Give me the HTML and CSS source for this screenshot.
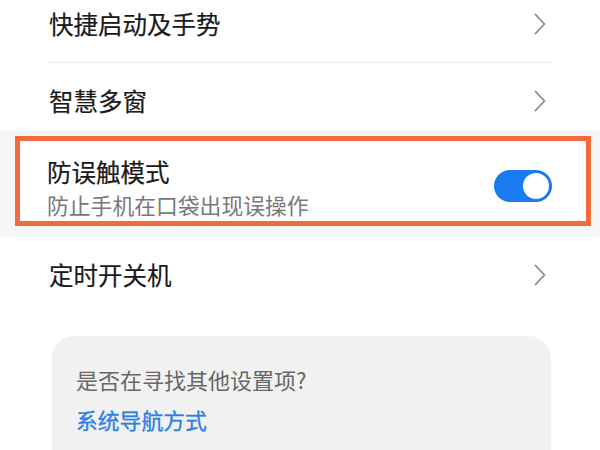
FILE: index.html
```html
<!DOCTYPE html>
<html lang="zh-CN">
<head>
  <meta charset="UTF-8">
  <meta name="viewport" content="width=device-width, initial-scale=1.0">
  <title>辅助功能</title>
  <link rel="stylesheet" href="styles.css">
</head>
<body>
  <div class="settings">
    <div class="row row-first">
      <span class="row-title">快捷启动及手势</span>
      <svg class="chevron" width="12" height="22" viewBox="0 0 12 22"><polyline points="1.5,1.5 10.5,11 1.5,20.5"/></svg>
    </div>
    <div class="divider"></div>
    <div class="row row-second">
      <span class="row-title">智慧多窗</span>
      <svg class="chevron" width="12" height="22" viewBox="0 0 12 22"><polyline points="1.5,1.5 10.5,11 1.5,20.5"/></svg>
    </div>

    <!-- ligne mise en évidence -->
    <div class="highlight">
      <div class="marked">
        <div class="marked-text">
          <div class="marked-title">防误触模式</div>
          <div class="marked-sub">防止手机在口袋出现误操作</div>
        </div>
        <div class="switch on"><span class="knob"></span></div>
      </div>
    </div>

    <div class="row">
      <span class="row-title">定时开关机</span>
      <svg class="chevron" width="12" height="22" viewBox="0 0 12 22"><polyline points="1.5,1.5 10.5,11 1.5,20.5"/></svg>
    </div>

    <div class="hint-card">
      <p class="hint-question">是否在寻找其他设置项?</p>
      <a class="hint-link" href="#">系统导航方式</a>
    </div>
  </div>
</body>
</html>
```

FILE: styles.css
```css
/* styles.css */
* {
  margin: 0;
  padding: 0;
  box-sizing: border-box;
}

body {
  font-family: "Noto Sans CJK SC", "Noto Sans", sans-serif;
  background: #fff;
  color: #1e1e1e;
  width: 600px;
  height: 450px;
  overflow: hidden;
}

.settings {
  margin-top: -14px;
}

.row {
  display: flex;
  align-items: center;
  justify-content: space-between;
  height: 76px;
  padding: 0 54px 0 49px;
}

.row-second {
  height: 67px;
  padding-top: 9px;
}

.row-title {
  font-size: 24.5px;
  line-height: 32px;
  color: #1a1a1a;
  -webkit-text-stroke: 0.2px #1a1a1a;
}

.chevron {
  display: block;
  fill: none;
  stroke: #8c8c8c;
  stroke-width: 1.8;
  stroke-linecap: round;
  stroke-linejoin: round;
}

.divider {
  height: 1px;
  background: #e8e8e8;
  margin: 0 48px;
}

.highlight {
  background: #f6f6f6;
  padding: 6px 9px 11px 15px;
}

.marked {
  display: flex;
  align-items: center;
  justify-content: space-between;
  height: 90px;
  border: 5px solid #f36b3c;
  background: #fff;
  padding: 14px 34px 0 27px;
}

.marked-title {
  font-size: 24.5px;
  line-height: 34px;
  color: #1a1a1a;
  -webkit-text-stroke: 0.2px #1a1a1a;
}

.marked-sub {
  font-size: 21.8px;
  line-height: 32px;
  color: #787878;
}

.switch {
  position: relative;
  width: 58px;
  height: 32px;
  border-radius: 16px;
  background: #d0d0d0;
  margin-top: -4px;
}

.switch.on {
  background: #1a7bf0;
}

.knob {
  position: absolute;
  top: 3px;
  right: 3px;
  width: 26px;
  height: 26px;
  border-radius: 50%;
  background: #fff;
}

.hint-card {
  margin: 23px 49px 0 52px;
  background: #f1f1f1;
  border-radius: 22px;
  padding: 28px 24px 40px;
}

.hint-question {
  font-size: 22px;
  line-height: 30px;
  color: #676767;
}

.hint-link {
  display: block;
  margin-top: 11px;
  font-size: 21.8px;
  line-height: 30px;
  color: #2a7fe3;
  text-decoration: none;
  -webkit-text-stroke: 0.3px #2a7fe3;
}
```
